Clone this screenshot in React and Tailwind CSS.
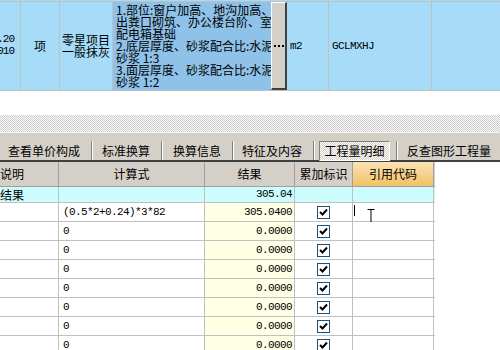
import React from 'react'

const CJK = { fontFamily: '"Noto Sans CJK SC", "Noto Sans", sans-serif' }
const MONO = { fontFamily: '"Liberation Mono", "DejaVu Sans Mono", monospace' }

const COLS = ['w-[59px]', 'w-[146px]', 'w-[90px]', 'w-[58px]', 'w-[81px]']

const DESC = [
  '1.部位:窗户加高、地沟加高、',
  '出粪口砌筑、办公楼台阶、室',
  '配电箱基础',
  '2.底层厚度、砂浆配合比:水泥',
  '砂浆 1:3',
  '3.面层厚度、砂浆配合比:水泥',
  '砂浆 1:2',
]

function Check() {
  return (
    <div className="w-[13px] h-[13px] border-[1.5px] border-[#1c5180] bg-white flex items-center justify-center">
      <svg width="9" height="8" viewBox="0 0 9 8">
        <path d="M1 4 L3.5 6.5 L8 1.5" fill="none" stroke="#000" strokeWidth="2" />
      </svg>
    </div>
  )
}

function Sep({ ml, mr }) {
  return <div className={`h-[19px] w-[2px] border-l border-[#808080] border-r border-r-white ${ml} ${mr}`} />
}

function DataRow({ formula, value, cursor }) {
  return (
    <div className="flex h-[19px] border-b border-[#c0c0c0]">
      <div className={`${COLS[0]} border-r border-[#c0c0c0] bg-white`} />
      <div className={`${COLS[1]} border-r border-[#c0c0c0] bg-white text-[11px] tracking-[-0.6px] pl-[4px] leading-[18px] text-black`} style={MONO}>
        {formula}
      </div>
      <div className={`${COLS[2]} border-r border-[#c0c0c0] bg-[#ffffe6] text-[11px] tracking-[-0.6px] pr-[2px] text-right leading-[18px] text-black`} style={MONO}>
        {value}
      </div>
      <div className={`${COLS[3]} border-r border-[#c0c0c0] bg-white flex items-center justify-center`}>
        <Check />
      </div>
      <div className={`${COLS[4]} border-r border-[#c0c0c0] bg-white relative`}>
        {cursor && (
          <>
            <div className="absolute left-[1px] top-[2px] w-px h-[11px] bg-black" />
            <svg className="absolute left-[14px] top-[6px]" width="8" height="16" viewBox="0 0 8 16">
              <path d="M0.5 0.5 H7.5 M4 0.5 V15.5 M0.5 15.5 H7.5" stroke="#000" strokeWidth="1" fill="none" />
            </svg>
          </>
        )}
      </div>
    </div>
  )
}

export default function App() {
  return (
    <div className="w-[500px] h-[350px] overflow-hidden bg-white text-black" style={CJK}>
      {/* selected item row */}
      <div className="bg-[#a6dcf8] pt-px">
        <div className="flex h-[90px] border-t border-b border-[#c0c0c0] text-[12px]">
          <div className="w-[21px] border-r border-[#c0c0c0] overflow-hidden flex flex-col items-end justify-center pr-[6px] leading-[12px] pb-[2px]" style={MONO}>
            <span className="text-[11px] tracking-[-1px]">.20</span>
            <span className="text-[11px] tracking-[-1px]">010</span>
          </div>
          <div className="w-[39px] border-r border-[#c0c0c0] flex items-center justify-center">项</div>
          <div className="w-[53px] border-r border-[#c0c0c0] flex flex-col justify-center pl-[2px] leading-[12px]">
            <span>零星项目</span>
            <span>一般抹灰</span>
          </div>
          <div className="w-[158px] bg-[#8ec2e8] overflow-hidden pl-[3px] pt-[2px] leading-[12px]">
            {DESC.map((d, i) => (
              <div key={i} className="whitespace-nowrap">{d}</div>
            ))}
          </div>
          <div className="w-[16px] bg-[#d4d0c8] border-t border-l border-white border-r-2 border-b-2 border-r-[#404040] border-b-[#404040] flex items-center justify-center">
            <svg width="10" height="2" viewBox="0 0 10 2">
              <rect x="0" y="0" width="2" height="2" fill="#000" />
              <rect x="4" y="0" width="2" height="2" fill="#000" />
              <rect x="8" y="0" width="2" height="2" fill="#000" />
            </svg>
          </div>
          <div className="w-[42px] border-r border-[#c0c0c0] flex items-center pl-[3px] text-[11px] tracking-[-0.6px]" style={MONO}>m2</div>
          <div className="w-[103px] border-r border-[#c0c0c0] flex items-center pl-[3px] text-[11px] tracking-[-0.6px]" style={MONO}>GCLMXHJ</div>
          <div className="flex-1" />
        </div>
      </div>

      {/* blank + splitter */}
      <div className="h-[24px] bg-white" />
      <div className="h-[17px] bg-[repeating-conic-gradient(#c8c8c8_0_25%,#ffffff_0_50%)] bg-[length:2px_2px]" />
      <div className="h-px bg-[#f4f4f4]" />

      {/* toolbar */}
      <div className="h-[29px] bg-[#d4d0c8] flex items-center text-[12px] pl-[8px] pt-[8px] border-b-2 border-[#404040]">
        <span>查看单价构成</span>
        <Sep ml="ml-[11px]" mr="mr-[9px]" />
        <span>标准换算</span>
        <Sep ml="ml-[11px]" mr="mr-[10px]" />
        <span>换算信息</span>
        <Sep ml="ml-[11px]" mr="mr-[8px]" />
        <span>特征及内容</span>
        <Sep ml="ml-[11px]" mr="mr-[4px]" />
        <div className="h-[20px] w-[71px] border border-t-[#808080] border-l-[#808080] border-r-white border-b-white flex items-center justify-center bg-[repeating-conic-gradient(#d4d0c8_0_25%,#ffffff_0_50%)] bg-[length:2px_2px]">
          <span>工程量明细</span>
        </div>
        <Sep ml="ml-[6px]" mr="mr-[9px]" />
        <span>反查图形工程量</span>
      </div>

      {/* grid */}
      <div className="w-[435px] text-[12px]">
        <div className="flex h-[25px] bg-[#d4d0c8] border-b border-[#a0a0a0]">
          <div className={`${COLS[0]} border-r border-[#a0a0a0] flex items-center`}>说明</div>
          <div className={`${COLS[1]} border-r border-[#a0a0a0] flex items-center justify-center`}>计算式</div>
          <div className={`${COLS[2]} border-r border-[#a0a0a0] flex items-center justify-center`}>结果</div>
          <div className={`${COLS[3]} border-r border-[#a0a0a0] flex items-center justify-center`}>累加标识</div>
          <div className={`${COLS[4]} border-r border-[#a0a0a0] flex items-center justify-center bg-gradient-to-b from-[#fbe3b4] to-[#f1c064]`}>引用代码</div>
        </div>
        <div className="flex h-[16px] bg-[#ccfcfc] border-b border-[#c0c0c0]">
          <div className={`${COLS[0]} border-r border-[#c0c0c0] leading-[15px]`}>结果</div>
          <div className={`${COLS[1]} border-r border-[#c0c0c0]`} />
          <div className={`${COLS[2]} border-r border-[#c0c0c0] text-right pr-[2px] text-[11px] tracking-[-0.6px] leading-[15px]`} style={MONO}>305.04</div>
          <div className={`${COLS[3]} border-r border-[#c0c0c0]`} />
          <div className={`${COLS[4]} border-r border-[#c0c0c0]`} />
        </div>
        <DataRow formula="(0.5*2+0.24)*3*82" value="305.0400" cursor />
        {[0, 1, 2, 3, 4, 5, 6].map((i) => (
          <DataRow key={i} formula="0" value="0.0000" />
        ))}
      </div>
    </div>
  )
}
